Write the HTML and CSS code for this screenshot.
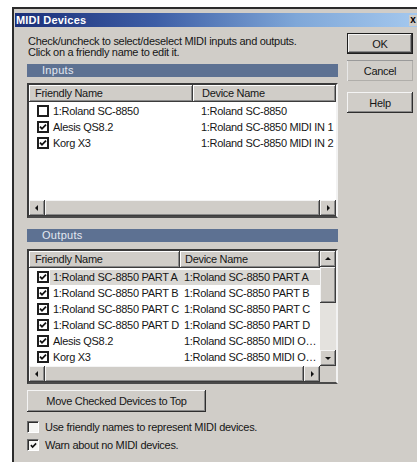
FILE: index.html
```html
<!DOCTYPE html>
<html>
<head>
<meta charset="utf-8">
<title>MIDI Devices</title>
<link rel="stylesheet" href="styles.css">
</head>
<body>
<div class="window">
  <div class="titlebar">
    <span class="title">MIDI Devices</span>
    <span class="close">x</span>
  </div>
  <div class="content">
    <div class="main">
      <p class="intro">Check/uncheck to select/deselect MIDI inputs and outputs.<br>Click on a friendly name to edit it.</p>

      <div class="section-bar">Inputs</div>
      <div class="listbox inputs">
        <div class="list-area">
          <div class="list-head">
            <div class="hcell h1">Friendly Name</div>
            <div class="hcell h2">Device Name</div>
          </div>
          <div class="row"><span class="cb"></span><span class="cells"><span class="c1">1:Roland SC-8850</span><span class="c2">1:Roland SC-8850</span></span></div>
          <div class="row"><span class="cb on"><svg viewBox="0 0 8 8"><polyline points="1,3.6 3,5.8 7,1.6"/></svg></span><span class="cells"><span class="c1">Alesis QS8.2</span><span class="c2">1:Roland SC-8850 MIDI IN 1</span></span></div>
          <div class="row"><span class="cb on"><svg viewBox="0 0 8 8"><polyline points="1,3.6 3,5.8 7,1.6"/></svg></span><span class="cells"><span class="c1">Korg X3</span><span class="c2">1:Roland SC-8850 MIDI IN 2</span></span></div>
        </div>
        <div class="hscroll">
          <span class="sbtn"><svg viewBox="0 0 8 8"><path d="M2 4L5 1v6z"/></svg></span>
          <span class="thumb"></span>
          <span class="sbtn"><svg viewBox="0 0 8 8"><path d="M6 4L3 1v6z"/></svg></span>
        </div>
      </div>

      <div class="section-bar outputs-bar">Outputs</div>
      <div class="listbox outputs">
        <div class="list-area">
          <div class="list-head">
            <div class="hcell h1">Friendly Name</div>
            <div class="hcell h2">Device Name</div>
          </div>
          <div class="row"><span class="cb on"><svg viewBox="0 0 8 8"><polyline points="1,3.6 3,5.8 7,1.6"/></svg></span><span class="cells sel"><span class="c1">1:Roland SC-8850 PART A</span><span class="c2">1:Roland SC-8850 PART A</span></span></div>
          <div class="row"><span class="cb on"><svg viewBox="0 0 8 8"><polyline points="1,3.6 3,5.8 7,1.6"/></svg></span><span class="cells"><span class="c1">1:Roland SC-8850 PART B</span><span class="c2">1:Roland SC-8850 PART B</span></span></div>
          <div class="row"><span class="cb on"><svg viewBox="0 0 8 8"><polyline points="1,3.6 3,5.8 7,1.6"/></svg></span><span class="cells"><span class="c1">1:Roland SC-8850 PART C</span><span class="c2">1:Roland SC-8850 PART C</span></span></div>
          <div class="row"><span class="cb on"><svg viewBox="0 0 8 8"><polyline points="1,3.6 3,5.8 7,1.6"/></svg></span><span class="cells"><span class="c1">1:Roland SC-8850 PART D</span><span class="c2">1:Roland SC-8850 PART D</span></span></div>
          <div class="row"><span class="cb on"><svg viewBox="0 0 8 8"><polyline points="1,3.6 3,5.8 7,1.6"/></svg></span><span class="cells"><span class="c1">Alesis QS8.2</span><span class="c2">1:Roland SC-8850 MIDI OUT 1</span></span></div>
          <div class="row"><span class="cb on"><svg viewBox="0 0 8 8"><polyline points="1,3.6 3,5.8 7,1.6"/></svg></span><span class="cells"><span class="c1">Korg X3</span><span class="c2">1:Roland SC-8850 MIDI OUT 2</span></span></div>
        </div>
        <div class="vscroll">
          <span class="sbtn"><svg viewBox="0 0 8 8"><path d="M4 2L1 5h6z"/></svg></span>
          <span class="vthumb"></span>
          <span class="vtrack"></span>
          <span class="sbtn"><svg viewBox="0 0 8 8"><path d="M4 6L1 3h6z"/></svg></span>
        </div>
        <div class="hscroll">
          <span class="sbtn"><svg viewBox="0 0 8 8"><path d="M2 4L5 1v6z"/></svg></span>
          <span class="thumb"></span>
          <span class="sbtn"><svg viewBox="0 0 8 8"><path d="M6 4L3 1v6z"/></svg></span>
        </div>
        <div class="corner"></div>
      </div>

      <button class="btn move">Move Checked Devices to Top</button>

      <label class="opt"><span class="box"></span>Use friendly names to represent MIDI devices.</label>
      <label class="opt"><span class="box"><svg viewBox="0 0 8 8"><polyline points="1,3.6 3,5.8 7,1.6"/></svg></span>Warn about no MIDI devices.</label>
    </div>

    <div class="side">
      <button class="btn default">OK</button>
      <button class="btn cancel">Cancel</button>
      <button class="btn help">Help</button>
    </div>
  </div>
</div>
</body>
</html>
```

FILE: styles.css
```css
html, body {
  margin: 0;
  height: 100%;
  overflow: hidden;
  background: #fff;
}

body {
  font: 11px "Liberation Sans", Arial, sans-serif;
  letter-spacing: -0.3px;
  color: #161616;
}

/* dialog frame */
.window {
  box-sizing: border-box;
  margin: 7px 0 0 12px;
  height: 455px;
  border-top: 2px solid #2b2b2b;
  border-left: 2px solid #2b2b2b;
  background: #d0cdc8;
  padding: 4px 0 0 1px;
}

.titlebar {
  display: flex;
  align-items: center;
  justify-content: space-between;
  height: 14px;
  padding-left: 1px;
  background: linear-gradient(to right, #1b2f78 0%, #3d5ea6 35%, #7fa7d8 70%, #a4c8ee 100%);
  color: #fff;
  font-weight: bold;
}

.title {
  letter-spacing: 0.2px;
}

.close {
  width: 8px;
  height: 11px;
  background: #d0cdc8;
  color: #000;
  font-size: 10px;
  line-height: 10px;
  text-align: center;
  font-weight: bold;
  letter-spacing: 0;
}

.content {
  display: flex;
  padding-left: 12px;
}

.main {
  width: 311px;
}

.intro {
  margin: 9px 0 0 1px;
  line-height: 11px;
}

.section-bar {
  margin-top: 6px;
  height: 13px;
  padding-left: 15px;
  background: #5d7192;
  color: #e3e8f1;
  line-height: 13px;
  letter-spacing: 0.3px;
}

.outputs-bar {
  margin-top: 11px;
}

/* list views */
.listbox {
  box-sizing: border-box;
  margin-top: 6px;
  height: 135px;
  border: 2px solid;
  border-color: #3a3a3a #f2f2f2 #4a4a4a #3a3a3a;
  background: #fff;
  display: grid;
  grid-template-rows: 1fr 16px;
  --c1: 143px;
  --h1: 164px;
  --p2: 8px;
}

.outputs {
  margin-top: 7px;
  grid-template-columns: 1fr 16px;
  --c1: 130px;
  --h1: 151px;
  --p2: 4px;
}

.list-area {
  overflow: hidden;
  min-width: 0;
}

.list-head {
  display: flex;
  height: 17px;
  margin-bottom: 1px;
}

.hcell {
  box-sizing: border-box;
  background: #d0cdc8;
  line-height: 17px;
  padding-left: 6px;
  white-space: nowrap;
  box-shadow: inset -1px -1px #3c3c3c, inset 1px 1px #fff, inset -2px -2px #8a8a8a;
}

.h1 {
  width: var(--h1);
}

.h2 {
  flex: 1;
  padding-left: calc(var(--p2) + 1px);
}

.row {
  display: flex;
  align-items: center;
  height: 16px;
  padding-left: 8px;
}

.cb {
  box-sizing: border-box;
  flex: none;
  width: 12px;
  height: 12px;
  border: 2px solid #1e1e1e;
  background: #fff;
  display: flex;
}

.cb svg,
.box svg {
  width: 8px;
  height: 8px;
  fill: none;
  stroke: #111;
  stroke-width: 1.8;
}

.cells {
  display: flex;
  flex: 1;
  min-width: 0;
  height: 15px;
  margin-left: 1px;
  align-items: center;
}

.cells.sel {
  background: #dad8d4;
}

.c1 {
  box-sizing: border-box;
  flex: none;
  width: var(--c1);
  padding-left: 3px;
  white-space: nowrap;
  overflow: hidden;
}

.c2 {
  flex: 1;
  min-width: 0;
  padding-left: var(--p2);
  white-space: nowrap;
  overflow: hidden;
  text-overflow: ellipsis;
}

/* scroll bars */
.hscroll {
  display: flex;
  height: 16px;
  background: #e4e2de;
}

.vscroll {
  display: flex;
  flex-direction: column;
  background: #e4e2de;
}

.sbtn,
.thumb,
.vthumb {
  box-sizing: border-box;
  background: #d0cdc8;
  box-shadow: inset -1px -1px #3c3c3c, inset 1px 1px #f4f4f4, inset -2px -2px #8a8a8a;
}

.sbtn {
  flex: none;
  width: 16px;
  height: 16px;
  display: flex;
  align-items: center;
  justify-content: center;
}

.sbtn svg {
  width: 8px;
  height: 8px;
  fill: #111;
}

.thumb {
  flex: 1;
}

.vthumb {
  flex: none;
  height: 36px;
}

.vtrack {
  flex: 1;
}

.corner {
  background: #d0cdc8;
}

/* buttons */
.btn {
  box-sizing: border-box;
  display: block;
  border: 0;
  padding: 0;
  font: inherit;
  letter-spacing: inherit;
  color: #161616;
  background: #d0cdc8;
  box-shadow: inset -1px -1px #2e2e2e, inset 1px 1px #f4f4f4, inset -2px -2px #8a8a8a;
}

.move {
  margin-top: 6px;
  width: 179px;
  height: 22px;
}

.side {
  margin-left: 9px;
  width: 66px;
  padding-top: 6px;
}

.side .btn {
  width: 66px;
  height: 21px;
}

.default {
  box-shadow: inset 0 0 0 1px #1e1e1e, inset -2px -2px #3c3c3c, inset 2px 2px #f4f4f4, inset -3px -3px #8a8a8a;
}

.cancel {
  margin-top: 6px;
  box-shadow: inset 0 1px #9a9a9a, inset 1px 0 #e8e8e8, inset -1px -1px #b0aeaa;
}

.help {
  margin-top: 11px;
}

/* options */
.opt {
  display: flex;
  align-items: center;
  height: 18px;
}

.opt:first-of-type {
  margin-top: 6px;
}

.box {
  box-sizing: border-box;
  flex: none;
  width: 12px;
  height: 12px;
  margin-right: 6px;
  display: flex;
  align-items: center;
  justify-content: center;
  background: #f6f6f4;
  border: 1px solid;
  border-color: #6a6a6a #fff #fff #6a6a6a;
  box-shadow: inset 1px 1px #2e2e2e;
}

.box svg {
  width: 7px;
  height: 7px;
}
```
